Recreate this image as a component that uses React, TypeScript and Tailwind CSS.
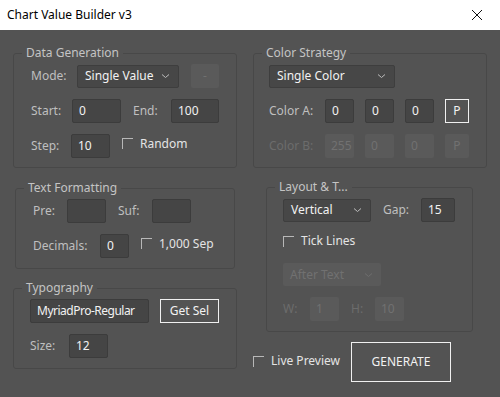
import React from 'react';

const font = { fontFamily: '"Noto Sans", "Open Sans", sans-serif' };

function Panel({ title, className, inner, children }: { title: string; className: string; inner: string; children: React.ReactNode }) {
  return (
    <fieldset className={`block border border-[#484848] rounded-[3px] ${className}`}>
      <legend className="ml-[8px] px-[4px] text-[12px] leading-[16px] text-[#c4c4c4] whitespace-nowrap">{title}</legend>
      <div className={inner}>{children}</div>
    </fieldset>
  );
}

function Field({ value = '', w, disabled = false, extra = '' }: { value?: string; w: string; disabled?: boolean; extra?: string }) {
  return (
    <div
      className={`${w} h-[24px] rounded-[2px] flex items-center px-[6px] text-[12px] whitespace-nowrap overflow-hidden ${extra} ${
        disabled ? 'bg-[#5a5a5a] text-[#717171]' : 'bg-[#454545] border border-[#3c3c3c] text-[#f2f2f2]'
      }`}
    >
      {value}
    </div>
  );
}

function Select({ value, w, disabled = false }: { value: string; w: string; disabled?: boolean }) {
  return (
    <div
      className={`${w} h-[23px] rounded-[2px] flex items-center justify-between pl-[7px] pr-[8px] text-[12px] whitespace-nowrap ${
        disabled ? 'bg-[#5a5a5a] text-[#717171]' : 'bg-[#474747] border border-[#3e3e3e] text-[#f2f2f2]'
      }`}
    >
      <span>{value}</span>
      <svg width="9" height="6" viewBox="0 0 9 6" fill="none">
        <path d="M1 1.5 L4.5 4.5 L8 1.5" stroke={disabled ? '#6e6e6e' : '#bdbdbd'} strokeWidth="1" />
      </svg>
    </div>
  );
}

function Check({ label }: { label: string }) {
  return (
    <div className="flex items-center">
      <div className="w-[11px] h-[11px] border-t border-l border-[#b8b8b8]" />
      <span className="ml-[7px] text-[12px] text-[#e4e4e4] whitespace-nowrap">{label}</span>
    </div>
  );
}

function Label({ text, w, disabled = false }: { text: string; w: string; disabled?: boolean }) {
  return <span className={`${w} text-[12px] whitespace-nowrap ${disabled ? 'text-[#6c6c6c]' : 'text-[#bfbfbf]'}`}>{text}</span>;
}

function Btn({ text, w, h }: { text: string; w: string; h: string }) {
  return (
    <div className={`${w} ${h} border border-[#f0f0f0] flex items-center justify-center text-[12px] text-[#f2f2f2]`}>
      {text}
    </div>
  );
}

export default function App() {
  return (
    <div className="w-[500px] h-[397px] bg-[#535353] flex flex-col" style={font}>
      {/* barra de título */}
      <div className="h-[30px] bg-white flex items-center justify-between pl-[7px] pr-[17px] text-[12px] text-black">
        <span>Chart Value Builder v3</span>
        <svg width="12" height="12" viewBox="0 0 12 12">
          <path d="M1 1 L11 11 M11 1 L1 11" stroke="#111" strokeWidth="1" />
        </svg>
      </div>

      <div className="flex pt-[15px]">
        {/* coluna esquerda */}
        <div className="ml-[13px] w-[224px] flex flex-col">
          <Panel title="Data Generation" className="pt-[3px] pb-[9px]" inner="pl-[17px] flex flex-col gap-[11px]">
            <div className="flex items-center h-[24px]">
              <Label text="Mode:" w="w-[46px]" />
              <Select value="Single Value" w="w-[102px]" />
              <div className="ml-[12px] w-[28px] h-[24px] bg-[#5a5a5a] rounded-[2px] flex items-center justify-center text-[12px] text-[#707070]">
                -
              </div>
            </div>
            <div className="flex items-center h-[24px]">
              <Label text="Start:" w="w-[41px]" />
              <Field value="0" w="w-[49px]" />
              <Label text="End:" w="ml-[12px] w-[38px]" />
              <Field value="100" w="w-[48px]" />
            </div>
            <div className="flex items-center h-[24px]">
              <Label text="Step:" w="w-[40px]" />
              <Field value="10" w="w-[39px]" />
              <div className="ml-[12px] mb-[5px]">
                <Check label="Random" />
              </div>
            </div>
          </Panel>

          <Panel title="Text Formatting" className="mx-[2px] mt-[12px] pt-[3px] pb-[10px]" inner="pl-[17px] flex flex-col gap-[11px]">
            <div className="flex items-center h-[24px]">
              <Label text="Pre:" w="w-[34px]" />
              <Field w="w-[39px]" />
              <Label text="Suf:" w="ml-[12px] w-[34px]" />
              <Field w="w-[39px]" />
            </div>
            <div className="flex items-center h-[24px]">
              <Label text="Decimals:" w="w-[67px]" />
              <Field value="0" w="w-[29px]" />
              <div className="ml-[12px] mb-[5px]">
                <Check label="1,000 Sep" />
              </div>
            </div>
          </Panel>

          <Panel title="Typography" className="mt-[11px] pt-[3px] pb-[10px]" inner="pl-[16px] flex flex-col gap-[11px]">
            <div className="flex items-center h-[24px]">
              <Field value="MyriadPro-Regular" w="w-[119px]" extra="tracking-[-0.5px]" />
              <div className="ml-[11px]">
                <Btn text="Get Sel" w="w-[59px]" h="h-[24px]" />
              </div>
            </div>
            <div className="flex items-center h-[24px]">
              <Label text="Size:" w="w-[39px]" />
              <Field value="12" w="w-[39px]" />
            </div>
          </Panel>
        </div>

        {/* coluna direita */}
        <div className="ml-[16px] w-[234px] flex flex-col">
          <Panel title="Color Strategy" className="pt-[3px] pb-[9px]" inner="pl-[15px] flex flex-col gap-[11px]">
            <div className="flex items-center h-[24px]">
              <Select value="Single Color" w="w-[126px]" />
            </div>
            <div className="flex items-center h-[24px]">
              <Label text="Color A:" w="w-[56px]" />
              <div className="flex gap-[11px]">
                <Field value="0" w="w-[29px]" />
                <Field value="0" w="w-[29px]" />
                <Field value="0" w="w-[29px]" />
                <Btn text="P" w="w-[24px]" h="h-[24px]" />
              </div>
            </div>
            <div className="flex items-center h-[24px]">
              <Label text="Color B:" w="w-[56px]" disabled />
              <div className="flex gap-[11px]">
                <Field value="255" w="w-[29px]" disabled />
                <Field value="0" w="w-[29px]" disabled />
                <Field value="0" w="w-[29px]" disabled />
                <div className="w-[24px] h-[24px] bg-[#5a5a5a] rounded-[2px] flex items-center justify-center text-[12px] text-[#717171]">
                  P
                </div>
              </div>
            </div>
          </Panel>

          <Panel title="Layout & T..." className="ml-[13px] w-[207px] mt-[11px] pt-[3px] pb-[10px]" inner="pl-[16px] flex flex-col">
            <div className="flex items-center h-[24px]">
              <Select value="Vertical" w="w-[88px]" />
              <Label text="Gap:" w="ml-[12px] w-[38px]" />
              <Field value="15" w="w-[34px]" />
            </div>
            <div className="mt-[10px]">
              <Check label="Tick Lines" />
            </div>
            <div className="mt-[13px]">
              <Select value="After Text" w="w-[98px]" disabled />
            </div>
            <div className="mt-[11px] flex items-center h-[24px]">
              <Label text="W:" w="w-[27px]" disabled />
              <Field value="1" w="w-[29px]" disabled />
              <Label text="H:" w="ml-[12px] w-[24px]" disabled />
              <Field value="10" w="w-[29px]" disabled />
            </div>
          </Panel>

          <div className="mt-[10px] flex items-start">
            <div className="mt-[10px] w-[98px]">
              <Check label="Live Preview" />
            </div>
            <Btn text="GENERATE" w="w-[100px]" h="h-[40px]" />
          </div>
        </div>
      </div>
    </div>
  );
}
